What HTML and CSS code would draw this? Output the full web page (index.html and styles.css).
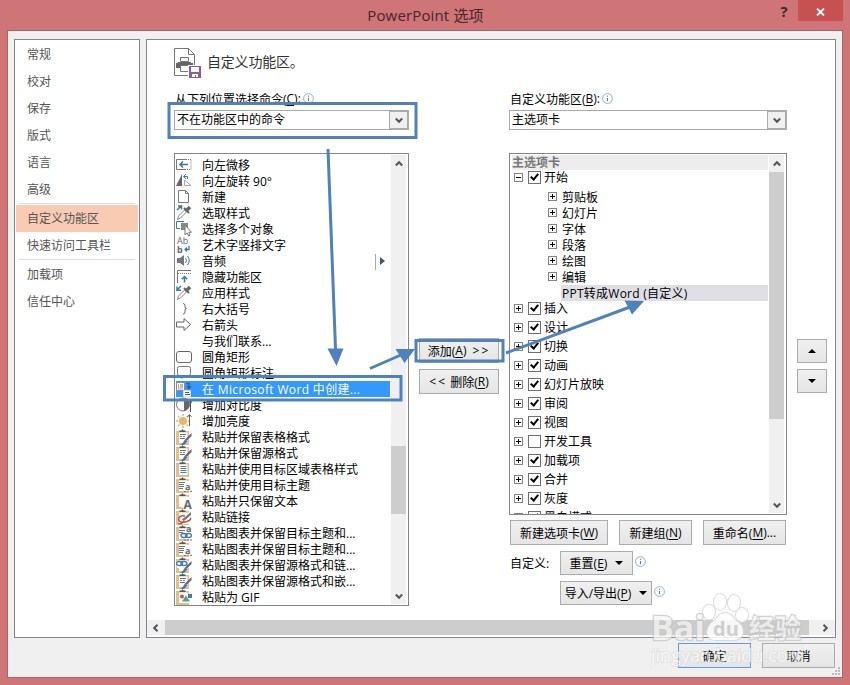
FILE: index.html
```html
<!DOCTYPE html>
<html lang="zh-CN">
    <head>

        <meta charset="utf-8">
        <title>PowerPoint 选项</title>

        <link rel="stylesheet" href="styles.css">

    </head>
    <body>

        <!-- Icons -->
        <svg class="defs" width="0" height="0">
            <symbol id="info" viewBox="0 0 11 11"><circle cx="5.5" cy="5.5" r="4.9" fill="#fff" stroke="#8fb0d6"/><path d="M5.5 5v3.2M5.5 2.6v1.2" stroke="#5f7fa5"/></symbol>
            <symbol id="up" viewBox="0 0 8 7"><path d="M.8 5.5L4 2.2l3.200 3.300" fill="none" stroke="#555" stroke-width="2"/></symbol>
            <symbol id="down" viewBox="0 0 8 7"><path d="M.8 1.500L4 4.800l3.200-3.300" fill="none" stroke="#555" stroke-width="2"/></symbol>
            <symbol id="nudge" viewBox="0 0 16 16"><path d="M10 2.500H.5v10H10" fill="none" stroke="#777"/><path d="M10 2.500h5v10h-5" fill="none" stroke="#777" stroke-dasharray="1 1"/><path d="M4 7.500h8M7 4.500l-3 3 3 3" fill="none" stroke="#3f74ad" stroke-width="1.600"/></symbol>
            <symbol id="rotate" viewBox="0 0 16 16"><path d="M6 1v12H0z" fill="#666"/><path d="M8.500 7v5.500H15z" fill="none" stroke="#aaa"/><path d="M8 3.500h3.500V6M10 1L7.500 3.500 10 6" fill="none" stroke="#3f74ad"/></symbol>
            <symbol id="new" viewBox="0 0 16 16"><path d="M2.500 1.500h7l3 3v9h-10zM9.500 1.500v3h3" fill="#fff" stroke="#777"/></symbol>
            <symbol id="pick" viewBox="0 0 16 16"><path d="M1 5l4-4M2 1h3.500v3.500" fill="none" stroke="#3f74ad" stroke-width="1.500"/><path d="M1.500 14.500l1-3.500 6-6 2 2-6 6z" fill="#fff" stroke="#888"/><path d="M8 3l5 5" stroke="#666" stroke-width="2"/><path d="M10 6l4-4" stroke="#666" stroke-width="3.500"/></symbol>
            <symbol id="apply" viewBox="0 0 16 16"><path d="M5 1L1 5M1 1.500v3.800h4" fill="none" stroke="#3f74ad" stroke-width="1.500"/><path d="M1.500 14.500l1-3.500 6-6 2 2-6 6z" fill="#fff" stroke="#888"/><path d="M8 3l5 5" stroke="#666" stroke-width="2"/><path d="M10 6l4-4" stroke="#666" stroke-width="3.500"/></symbol>
            <symbol id="multi" viewBox="0 0 16 16"><path d="M8 .5H.5v7H4" fill="none" stroke="#3f74ad"/><path d="M5 2h7v7H5z" fill="#888"/><path d="M9 4v10l2.200-2 1.300 3 1.500-.7-1.200-3H15.500z" fill="#fff" stroke="#777"/></symbol>
            <symbol id="wordart" viewBox="0 0 16 16"><text class="glyph" x="1" y="7">Ab</text><text class="glyph bold" x="1" y="15.500">b</text><path d="M9 12.500h4V9M11 10.500l-2 2 2 2" fill="none" stroke="#3f74ad" stroke-width="1.300"/></symbol>
            <symbol id="audio" viewBox="0 0 16 16"><path d="M1 5h3l4-3v11L4 10H1z" fill="#777"/><path d="M9.500 5q2 2.500 0 5M11.500 3q3.500 4.500 0 9" fill="none" stroke="#3f74ad"/></symbol>
            <symbol id="hide" viewBox="0 0 16 16"><path d="M1.500 14V1.500H15" fill="none" stroke="#777"/><path d="M2 4.500h13" stroke="#777" stroke-dasharray="1 1"/><path d="M8.500 13.500V8M5.800 10.200l2.700-2.700 2.700 2.700" fill="none" stroke="#3f74ad" stroke-width="1.500"/></symbol>
            <symbol id="brace" viewBox="0 0 16 16"><path d="M7 2.500q2 0 2 2v1.500q0 1.500 1.500 1.500Q9 7.500 9 9v2q0 2-2 2" fill="none" stroke="#666"/></symbol>
            <symbol id="arrow" viewBox="0 0 16 16"><path d="M.5 5H8V1.500l6.500 6-6.500 6V10H.5z" fill="#fff" stroke="#666"/></symbol>
            <symbol id="rounded" viewBox="0 0 16 16"><rect x=".5" y="2.500" width="15" height="11" rx="2.500" fill="#fff" stroke="#666"/></symbol>
            <symbol id="callout" viewBox="0 0 16 16"><path d="M3.500 1.500h9q2 0 2 2v5q0 2-2 2H9l-3 3v-3H3.500q-2 0-2-2v-5q0-2 2-2z" fill="#fff" stroke="#777"/></symbol>
            <symbol id="word" viewBox="0 0 16 16"><path d="M.5 1.500h8v8h-8z" fill="#fff" stroke="#889"/><path d="M2.500 3v5H7" fill="none" stroke="#dca85b"/><path d="M4 4h3M4 6h3" stroke="#777"/><path d="M10 2.500h3v4M11 5l2 2.500L15 5" fill="none" stroke="#2864a8" stroke-width="1.500"/><path d="M7.500 9.500h7v6h-7z" fill="#fff" stroke="#ddd"/><path d="M9 11.500h4M9 13.500h5" stroke="#557"/></symbol>
            <symbol id="contrast" viewBox="0 0 16 16"><circle cx="7" cy="7.500" r="6.500" fill="#fff" stroke="#777"/><path d="M8 1.500h1q4.500 1.500 4.500 6t-4.500 6H8z" fill="#666"/><path d="M14.500 15V4M12.500 6l2-3 1.500 3" fill="none" stroke="#555"/></symbol>
            <symbol id="bright" viewBox="0 0 16 16"><circle cx="7" cy="8" r="4" fill="#e9b56c"/><path d="M7 1v2M7 13v2M0 8h2M12 8h1M2 3l1.500 1.500M2 13l1.500-1.500M12 3l-1.500 1.500M12 13l-1.500-1.500" stroke="#e9b56c" stroke-width="1.500"/><path d="M13.500 13V2M11.500 4l2-2.500 2 2.500" fill="none" stroke="#666"/></symbol>
            <symbol id="board" viewBox="0 0 16 16"><path d="M0 2h13v14H0z" fill="#dfbf8d"/><path d="M3 3.500h8.500V14H3z" fill="#fff"/><path d="M3.500 3V1.500h2L6.500 0l1 1.500h2V3z" fill="#555"/></symbol>
            <symbol id="brush" viewBox="0 0 16 16"><use href="#board"/><path d="M4 5.500h6M4 9.500h5" stroke="#4a7ab0"/><path d="M4 7.500h6" stroke="#c55" stroke-dasharray="2 1"/><path d="M15.500 4v3l-5 5-1.500-1.500z" fill="#666"/><path d="M9 10.500l2.500 2L8 16H4q3-1.500 5-5.500z" fill="#447bb5"/></symbol>
            <symbol id="table" viewBox="0 0 16 16"><use href="#board"/><path d="M4.500 5.500h6M4.500 7.500h6M4.500 9.500h6M4.500 11.500h6" stroke="#4a7ab0"/></symbol>
            <symbol id="theme" viewBox="0 0 16 16"><use href="#board"/><path d="M3 4h13v9H3z" fill="#fff"/><path d="M3 5.500h6M3 7.500h5M3 9.500h5M3 11.500h4" stroke="#4a7ab0"/><text class="glyph bold" x="9" y="12.500">a</text><path d="M8 14.500h2M14 14.500h2" stroke="#c55"/><path d="M11 14.500h2" stroke="#dca85b"/></symbol>
            <symbol id="text" viewBox="0 0 16 16"><use href="#board"/><path d="M3 4h10v12H8l-2-2H3z" fill="#fff"/><text class="glyph big" x="7.500" y="15.500">A</text></symbol>
            <symbol id="link" viewBox="0 0 16 16"><use href="#board"/><path d="M3 4h12v11H3z" fill="#fff"/><path d="M15 3v3l-7 6-2-1.500z" fill="#777"/><path d="M9 7q-5-1-6 2t2 4 7-1 2-3M2 14q3 2 6-2" fill="none" stroke="#c8504a" stroke-width="1.500"/></symbol>
            <symbol id="themelink" viewBox="0 0 16 16"><use href="#board"/><path d="M3 4h13v10H3z" fill="#fff"/><text class="glyph bold" x="10" y="6.500">a</text><path d="M3 5.500h6M3 7.500h4" stroke="#4a7ab0"/><ellipse cx="8" cy="10.500" rx="3" ry="2" fill="none" stroke="#447bb5" stroke-width="1.400"/><ellipse cx="12.500" cy="10.500" rx="3" ry="2" fill="none" stroke="#447bb5" stroke-width="1.400"/><path d="M8 15h8" stroke="#a66" stroke-dasharray="2 1"/></symbol>
            <symbol id="brushlink" viewBox="0 0 16 16"><use href="#board"/><path d="M1 4h12v7H1z" fill="#fff"/><ellipse cx="3.500" cy="6.500" rx="3" ry="2" fill="none" stroke="#447bb5" stroke-width="1.400"/><ellipse cx="8" cy="6.500" rx="3" ry="2" fill="none" stroke="#447bb5" stroke-width="1.400"/><path d="M15.500 4v3l-5 5-1.500-1.500z" fill="#666"/><path d="M9 10.500l2.500 2L8 16H4q3-1.500 5-5.500z" fill="#447bb5"/></symbol>
            <symbol id="gif" viewBox="0 0 16 16"><use href="#board"/><path d="M3 5h13v9H3z" fill="#fff"/><circle cx="6" cy="7.500" r="2" fill="#c8504a"/><path d="M12 5h4v4h-4z" fill="#447bb5"/><path d="M10 6.500l4 6H6z" fill="#5d9c86"/></symbol>
        </svg>

        <div class="titlebar">
            <div class="title">PowerPoint 选项</div>
            <div class="help">?</div>
            <div class="close"><svg width="9" height="8" viewBox="0 0 9 8"><path d="M1 .5l7 7M8 .5l-7 7" stroke="#fff" stroke-width="1.800"/></svg></div>
        </div>

        <div class="client">

            <div class="panels">

                <ul class="sidebar">
                    <li>常规</li>
                    <li>校对</li>
                    <li>保存</li>
                    <li>版式</li>
                    <li>语言</li>
                    <li>高级</li>
                    <li class="separator"></li>
                    <li class="active">自定义功能区</li>
                    <li>快速访问工具栏</li>
                    <li class="separator"></li>
                    <li>加载项</li>
                    <li>信任中心</li>
                </ul>

                <div class="main">

                    <div class="heading">
                        <svg width="28" height="31" viewBox="0 0 28 31"><path d="M.5.500h14l6 6v21H.5zM14.500.500v6h6" fill="#fff" stroke="#777"/><path d="M6.500 9.500h8v4h-8z" fill="#fff" stroke="#777"/><path d="M2 15h2v-1h13v1h2v5H2z" fill="#666"/><path d="M6.500 17.500h8v6h-8z" fill="#fff" stroke="#777"/><path d="M14 17h14v14H14z" fill="#fff"/><path d="M15 18h12v12H15z" fill="#8460a0"/><path d="M17 19h8v5h-8zM18 26h6v3h-2v-2h-1v2h-3z" fill="#fff"/></svg>
                        <span>自定义功能区。</span>
                    </div>

                    <div class="columns">

                        <div class="commands">
                            <div class="label">从下列位置选择命令(<u>C</u>):<svg width="11" height="11"><use href="#info"/></svg></div>
                            <div class="select"><span>不在功能区中的命令</span><i><svg width="8" height="7"><use href="#down"/></svg></i></div>
                            <div class="list">
                                <ul class="rows">
                                    <li><svg><use href="#nudge"/></svg>向左微移</li>
                                    <li><svg><use href="#rotate"/></svg>向左旋转 90°</li>
                                    <li><svg><use href="#new"/></svg>新建</li>
                                    <li><svg><use href="#pick"/></svg>选取样式</li>
                                    <li><svg><use href="#multi"/></svg>选择多个对象</li>
                                    <li><svg><use href="#wordart"/></svg>艺术字竖排文字</li>
                                    <li><svg><use href="#audio"/></svg>音频<span class="split"></span></li>
                                    <li><svg><use href="#hide"/></svg>隐藏功能区</li>
                                    <li><svg><use href="#apply"/></svg>应用样式</li>
                                    <li><svg><use href="#brace"/></svg>右大括号</li>
                                    <li><svg><use href="#arrow"/></svg>右箭头</li>
                                    <li><svg></svg>与我们联系...</li>
                                    <li><svg><use href="#rounded"/></svg>圆角矩形</li>
                                    <li><svg><use href="#callout"/></svg>圆角矩形标注</li>
                                    <li class="selected"><svg><use href="#word"/></svg>在 Microsoft Word 中创建...</li>
                                    <li><svg><use href="#contrast"/></svg>增加对比度</li>
                                    <li><svg><use href="#bright"/></svg>增加亮度</li>
                                    <li><svg><use href="#brush"/></svg>粘贴并保留表格格式</li>
                                    <li><svg><use href="#brush"/></svg>粘贴并保留源格式</li>
                                    <li><svg><use href="#table"/></svg>粘贴并使用目标区域表格样式</li>
                                    <li><svg><use href="#theme"/></svg>粘贴并使用目标主题</li>
                                    <li><svg><use href="#text"/></svg>粘贴并只保留文本</li>
                                    <li><svg><use href="#link"/></svg>粘贴链接</li>
                                    <li><svg><use href="#themelink"/></svg>粘贴图表并保留目标主题和...</li>
                                    <li><svg><use href="#theme"/></svg>粘贴图表并保留目标主题和...</li>
                                    <li><svg><use href="#brushlink"/></svg>粘贴图表并保留源格式和链...</li>
                                    <li><svg><use href="#brush"/></svg>粘贴图表并保留源格式和嵌...</li>
                                    <li><svg><use href="#gif"/></svg>粘贴为 GIF</li>
                                </ul>
                                <div class="scrollbar">
                                    <svg width="8" height="7"><use href="#up"/></svg>
                                    <div class="track"><div class="thumb"></div></div>
                                    <svg width="8" height="7"><use href="#down"/></svg>
                                </div>
                            </div>
                        </div>

                        <div class="transfer">
                            <div class="button">添加(<u>A</u>) <span>&gt;&gt;</span></div>
                            <div class="button"><span>&lt;&lt;</span> 删除(<u>R</u>)</div>
                        </div>

                        <div class="ribbon">
                            <div class="label">自定义功能区(<u>B</u>):<svg width="11" height="11"><use href="#info"/></svg></div>
                            <div class="select"><span>主选项卡</span><i><svg width="8" height="7"><use href="#down"/></svg></i></div>
                            <div class="list tree">
                                <div class="nodes">
                                    <div class="caption">主选项卡</div>
                                    <div class="tab"><b class="minus"></b><input type="checkbox" checked>开始</div>
                                    <div class="group"><b></b>剪贴板</div>
                                    <div class="group"><b></b>幻灯片</div>
                                    <div class="group"><b></b>字体</div>
                                    <div class="group"><b></b>段落</div>
                                    <div class="group"><b></b>绘图</div>
                                    <div class="group"><b></b>编辑</div>
                                    <div class="group current">PPT转成Word (自定义)</div>
                                    <div class="tab"><b></b><input type="checkbox" checked>插入</div>
                                    <div class="tab"><b></b><input type="checkbox" checked>设计</div>
                                    <div class="tab"><b></b><input type="checkbox" checked>切换</div>
                                    <div class="tab"><b></b><input type="checkbox" checked>动画</div>
                                    <div class="tab"><b></b><input type="checkbox" checked>幻灯片放映</div>
                                    <div class="tab"><b></b><input type="checkbox" checked>审阅</div>
                                    <div class="tab"><b></b><input type="checkbox" checked>视图</div>
                                    <div class="tab"><b></b><input type="checkbox">开发工具</div>
                                    <div class="tab"><b></b><input type="checkbox" checked>加载项</div>
                                    <div class="tab"><b></b><input type="checkbox" checked>合并</div>
                                    <div class="tab"><b></b><input type="checkbox" checked>灰度</div>
                                    <div class="tab"><b></b><input type="checkbox" checked>黑白模式</div>
                                </div>
                                <div class="scrollbar">
                                    <svg width="8" height="7"><use href="#up"/></svg>
                                    <div class="track"><div class="thumb"></div></div>
                                    <svg width="8" height="7"><use href="#down"/></svg>
                                </div>
                            </div>
                            <div class="actions">
                                <div class="button new-tab">新建选项卡(<u>W</u>)</div>
                                <div class="button new-group">新建组(<u>N</u>)</div>
                                <div class="button rename">重命名(<u>M</u>)...</div>
                            </div>
                            <div class="custom">
                                <span>自定义:</span>
                                <div class="button reset">重置(<u>E</u>)<em></em></div>
                                <svg width="11" height="11"><use href="#info"/></svg>
                            </div>
                            <div class="custom">
                                <span></span>
                                <div class="button import">导入/导出(<u>P</u>)<em></em></div>
                                <svg width="11" height="11"><use href="#info"/></svg>
                            </div>
                        </div>

                        <div class="order">
                            <div class="button"><em class="up"></em></div>
                            <div class="button"><em></em></div>
                        </div>

                    </div>

                    <div class="hscroll">
                        <svg width="7" height="8" viewBox="0 0 7 8"><path d="M5.500.800L2.200 4l3.300 3.200" fill="none" stroke="#555" stroke-width="2"/></svg>
                        <div class="thumb"></div>
                        <svg width="7" height="8" viewBox="0 0 7 8"><path d="M1.500.800L4.800 4 1.500 7.200" fill="none" stroke="#555" stroke-width="2"/></svg>
                    </div>

                </div>

            </div>

            <div class="footer">
                <div class="button ok">确定</div>
                <div class="button">取消</div>
            </div>

            <svg class="grip" width="9" height="9" viewBox="0 0 9 9"><path d="M6 0h2v2H6zM3 3h2v2H3zM6 3h2v2H6zM0 6h2v2H0zM3 6h2v2H3zM6 6h2v2H6z" fill="#bbb"/></svg>

        </div>

        <!-- Marks drawn over the dialog -->
        <svg class="marks" width="850" height="685" viewBox="0 0 850 685">
            <g fill="none" stroke="#4f81bd" stroke-width="3">
                <rect x="169" y="103.500" width="247" height="34"/>
                <rect x="164.500" y="376.500" width="236.500" height="23.500"/>
                <rect x="416" y="340.500" width="87" height="20.500"/>
                <path d="M328 149l7.500 200M370 368.500l32-14M506 353l124-46"/>
            </g>
            <path d="M327.500 348.500h16L336.500 366zM395.500 349h19.500L404.500 363zM624.500 300.500L644 301l-12 13.500z" fill="#4f81bd"/>
        </svg>

        <!-- Watermark -->
        <svg class="watermark" width="170" height="80" viewBox="0 0 170 80">
            <g class="paw">
                <ellipse cx="59" cy="25" rx="6" ry="7.500"/>
                <ellipse cx="70" cy="15" rx="6" ry="8"/>
                <ellipse cx="84" cy="16" rx="6" ry="8"/>
                <ellipse cx="92" cy="28" rx="6" ry="7"/>
                <path d="M75 26q6 0 9 6 10 6 9 14-2 8-12 7H68q-10 1-11-7 0-8 9-14 4-6 9-6z"/>
            </g>
            <text class="logo" x="1" y="53">Bai</text>
            <text class="du" x="63" y="49">du</text>
            <text class="logo cn" x="99" y="51">经验</text>
            <text class="url" x="1" y="75">jingyan.baidu.com</text>
        </svg>

    </body>
</html>
```
FILE: styles.css
```css
body {
    margin: 0;
    width: 850px;
    height: 685px;
    position: relative;
    overflow: hidden;
    background-color: #cf7477;
    font-family: "Open Sans", "Noto Sans CJK SC", sans-serif;
    font-size: 12px;
    color: #000;
}
ul {
    list-style-type: none;
    margin: 0;
    padding: 0;
}
svg {
    display: block;
    flex: none;
}
.defs {
    display: none;
}
u {
    text-underline-offset: 2px;
}

/** Title bar **/
.titlebar {
    display: flex;
    height: 30px;
    padding-right: 7px;
    color: #46262b;
}
.title {
    flex: 1;
    padding-left: 81px;
    text-align: center;
    font-size: 15px;
    letter-spacing: 0.15px;
    line-height: 31px;
}
.help {
    width: 28px;
    text-align: center;
    font-size: 15px;
    font-weight: bold;
    line-height: 22px;
}
.close {
    display: flex;
    align-items: center;
    justify-content: center;
    width: 45px;
    height: 21px;
    padding-top: 2px;
    box-sizing: border-box;
    background-color: #c75050;
}

/** Client area **/
.client {
    position: relative;
    width: 836px;
    height: 648px;
    margin-left: 7px;
    padding: 8px 6px 0 6px;
    box-sizing: border-box;
    border: 1px solid #a9646a;
    background-color: #f0f0f0;
}
.panels {
    display: flex;
    gap: 6px;
    height: 599px;
}

/** Sidebar **/
.sidebar {
    width: 126px;
    padding: 1px;
    box-sizing: border-box;
    border: 1px solid #83868b;
    background-color: #fff;
    color: #555;
}
.sidebar li {
    height: 27px;
    padding-left: 11px;
    line-height: 27px;
}
.sidebar .active {
    background-color: #f9cbb3;
}
.sidebar .separator {
    height: 1px;
    margin: 0 3px 1px;
    padding: 0;
    background-color: #ddd;
}

/** Main panel **/
.main {
    display: flex;
    flex-direction: column;
    width: 690px;
    box-sizing: border-box;
    border: 1px solid #83868b;
    background-color: #fff;
}
.heading {
    display: flex;
    gap: 5px;
    height: 50px;
    padding: 8px 0 0 27px;
    box-sizing: border-box;
    font-size: 14px;
    line-height: 28px;
    color: #333;
}
.heading span {
    letter-spacing: -0.2px;
}
.columns {
    display: flex;
    gap: 10px;
    height: 530px;
    padding-left: 27px;
}
.commands {
    width: 235px;
}
.ribbon {
    width: 278px;
}
.label {
    display: flex;
    align-items: center;
    height: 17px;
    padding-left: 1px;
    white-space: nowrap;
}
.label svg {
    margin-left: 2px;
}

/** Select **/
.select {
    display: flex;
    height: 20px;
    margin: 3px 0 23px;
    box-sizing: border-box;
    border: 1px solid #ababab;
    line-height: 18px;
}
.select span {
    flex: 1;
    padding-left: 2px;
}
.select i {
    display: flex;
    align-items: center;
    justify-content: center;
    width: 19px;
    box-sizing: border-box;
    border: 1px solid #ababab;
    background-color: #f0f0f0;
}

/** Lists **/
.list {
    display: flex;
    height: 453px;
    padding: 1px;
    box-sizing: border-box;
    border: 1px solid #83868b;
    overflow: hidden;
}
.rows {
    flex: 1;
    padding-top: 2px;
}
.rows li {
    display: flex;
    align-items: center;
    height: 16px;
    padding-top: 2px;
    box-sizing: border-box;
    line-height: 14px;
    white-space: nowrap;
}
.rows svg {
    width: 16px;
    height: 16px;
    margin: 0 10px 2px 0;
}
.rows .selected {
    margin-right: 1px;
    background-color: #3399ff;
    color: #fff;
    letter-spacing: 0.35px;
}
.split {
    height: 16px;
    margin-left: auto;
    margin-right: 6px;
    padding-left: 4px;
    border-left: 1px solid #aaa;
}
.split:after {
    content: "";
    display: block;
    margin-top: 3px;
    border-left: 5px solid #41557d;
    border-top: 4px solid transparent;
    border-bottom: 4px solid transparent;
}
.glyph {
    font: 9px "Open Sans", sans-serif;
    fill: #666;
}
.glyph.bold {
    font-weight: bold;
}
.glyph.big {
    font-size: 12px;
    font-weight: bold;
}

/** Scrollbars **/
.scrollbar {
    display: flex;
    flex-direction: column;
    align-items: center;
    width: 15px;
    margin-right: 1px;
    padding: 5px 0 4px;
    box-sizing: border-box;
    background-color: #f0f0f0;
}
.track {
    flex: 1;
    width: 100%;
}
.thumb {
    background-color: #cdcdcd;
}
.commands .thumb {
    height: 68px;
    margin-top: 279px;
}
.tree .thumb {
    height: 247px;
    margin-top: 5px;
}
.hscroll {
    display: flex;
    align-items: center;
    height: 15px;
    padding: 0 6px 0 5px;
    background-color: #f0f0f0;
}
.hscroll .thumb {
    width: 645px;
    height: 15px;
    margin: 0 13px 0 6px;
}

/** Buttons **/
.button {
    display: flex;
    align-items: center;
    justify-content: center;
    height: 25px;
    box-sizing: border-box;
    border: 1px solid #acacac;
    background: linear-gradient(#f0f0f0, #e5e5e5);
    white-space: pre;
}
.button em {
    margin-left: 8px;
    border-top: 4px solid #000;
    border-left: 4px solid transparent;
    border-right: 4px solid transparent;
}
.transfer {
    display: flex;
    flex-direction: column;
    gap: 6px;
    width: 80px;
    padding-top: 248px;
}
.transfer span {
    letter-spacing: 2px;
}
.transfer u + span,
.transfer .button:first-child span {
    margin-left: 3px;
}
.order {
    display: flex;
    flex-direction: column;
    gap: 6px;
    width: 30px;
    padding-top: 249px;
}
.order .button {
    height: 24px;
}
.order em {
    margin: 0;
}
.order .up {
    border-top: 0;
    border-bottom: 4px solid #000;
}

/** Ribbon tree **/
.tree {
    height: 362px;
}
.nodes {
    width: 257px;
    margin-right: 1px;
}
.caption {
    height: 15px;
    margin-left: 1px;
    background-color: #ededed;
    font-weight: bold;
    line-height: 15px;
    color: #777;
}
.tab,
.group {
    display: flex;
    align-items: center;
    height: 15px;
    margin-bottom: 4px;
    padding-left: 3px;
    line-height: 15px;
    white-space: nowrap;
}
.group {
    height: 16px;
    margin: 0 0 0 34px;
    padding-top: 2px;
    box-sizing: border-box;
    line-height: 14px;
}
.nodes b {
    width: 9px;
    height: 9px;
    margin-right: 5px;
    box-sizing: border-box;
    border: 1px solid #848484;
    background: linear-gradient(#000, #000) center / 5px 1px no-repeat,
                linear-gradient(#000, #000) center / 1px 5px no-repeat;
}
.nodes .group b {
    margin-bottom: 3px;
}
.nodes .minus {
    background: linear-gradient(#000, #000) center / 5px 1px no-repeat;
}
.nodes input {
    appearance: none;
    position: relative;
    width: 13px;
    height: 13px;
    margin: 0 3px 0 0;
    box-sizing: border-box;
    border: 1px solid #707070;
    background-color: #fff;
}
.nodes input:checked:after {
    content: "";
    position: absolute;
    left: 3px;
    top: 0;
    width: 3px;
    height: 6px;
    border: solid #000;
    border-width: 0 2px 2px 0;
    transform: rotate(40deg);
}
.group.current {
    margin-left: 50px;
    padding-left: 1px;
    background-color: #e0dfe5;
    letter-spacing: 0.25px;
}

/** Below the tree **/
.actions {
    display: flex;
    gap: 11px;
    margin: 5px 0 6px 1px;
}
.new-tab {
    width: 98px;
}
.new-group {
    width: 73px;
}
.rename {
    width: 83px;
}
.custom {
    display: flex;
    align-items: center;
    height: 24px;
    margin-bottom: 6px;
    padding-left: 1px;
}
.custom span {
    width: 50px;
}
.custom svg {
    margin-bottom: 3px;
}
.custom .button {
    height: 24px;
    margin-right: 2px;
}
.reset {
    width: 73px;
}
.import {
    width: 92px;
}

/** Footer **/
.footer {
    display: flex;
    justify-content: flex-end;
    gap: 11px;
    padding: 5px 1px 0 0;
}
.footer .button {
    width: 73px;
}
.footer .ok {
    border-color: #569de5;
}
.grip {
    position: absolute;
    right: 1px;
    bottom: 1px;
}

/** Marks and watermark **/
.marks {
    position: absolute;
    left: 0;
    top: 0;
}
.watermark {
    position: absolute;
    left: 650px;
    top: 587px;
}
.watermark * {
    paint-order: stroke;
}
.paw {
    fill: #fff;
    stroke: #d4d4d4;
    stroke-width: 2px;
    opacity: 0.85;
}
.logo {
    font: bold 34px "Open Sans", sans-serif;
    fill: #f4f4f4;
    stroke: #c4c4c4;
    stroke-width: 2.5px;
    opacity: 0.75;
}
.logo.cn {
    font: bold 26px "Noto Sans CJK SC", sans-serif;
}
.du {
    font: bold 20px "Open Sans", sans-serif;
    fill: #cfcfcf;
}
.url {
    font: 18px "Open Sans", sans-serif;
    fill: #fff;
    stroke: #d4d4d4;
    stroke-width: 1.5px;
    opacity: 0.65;
}
```
